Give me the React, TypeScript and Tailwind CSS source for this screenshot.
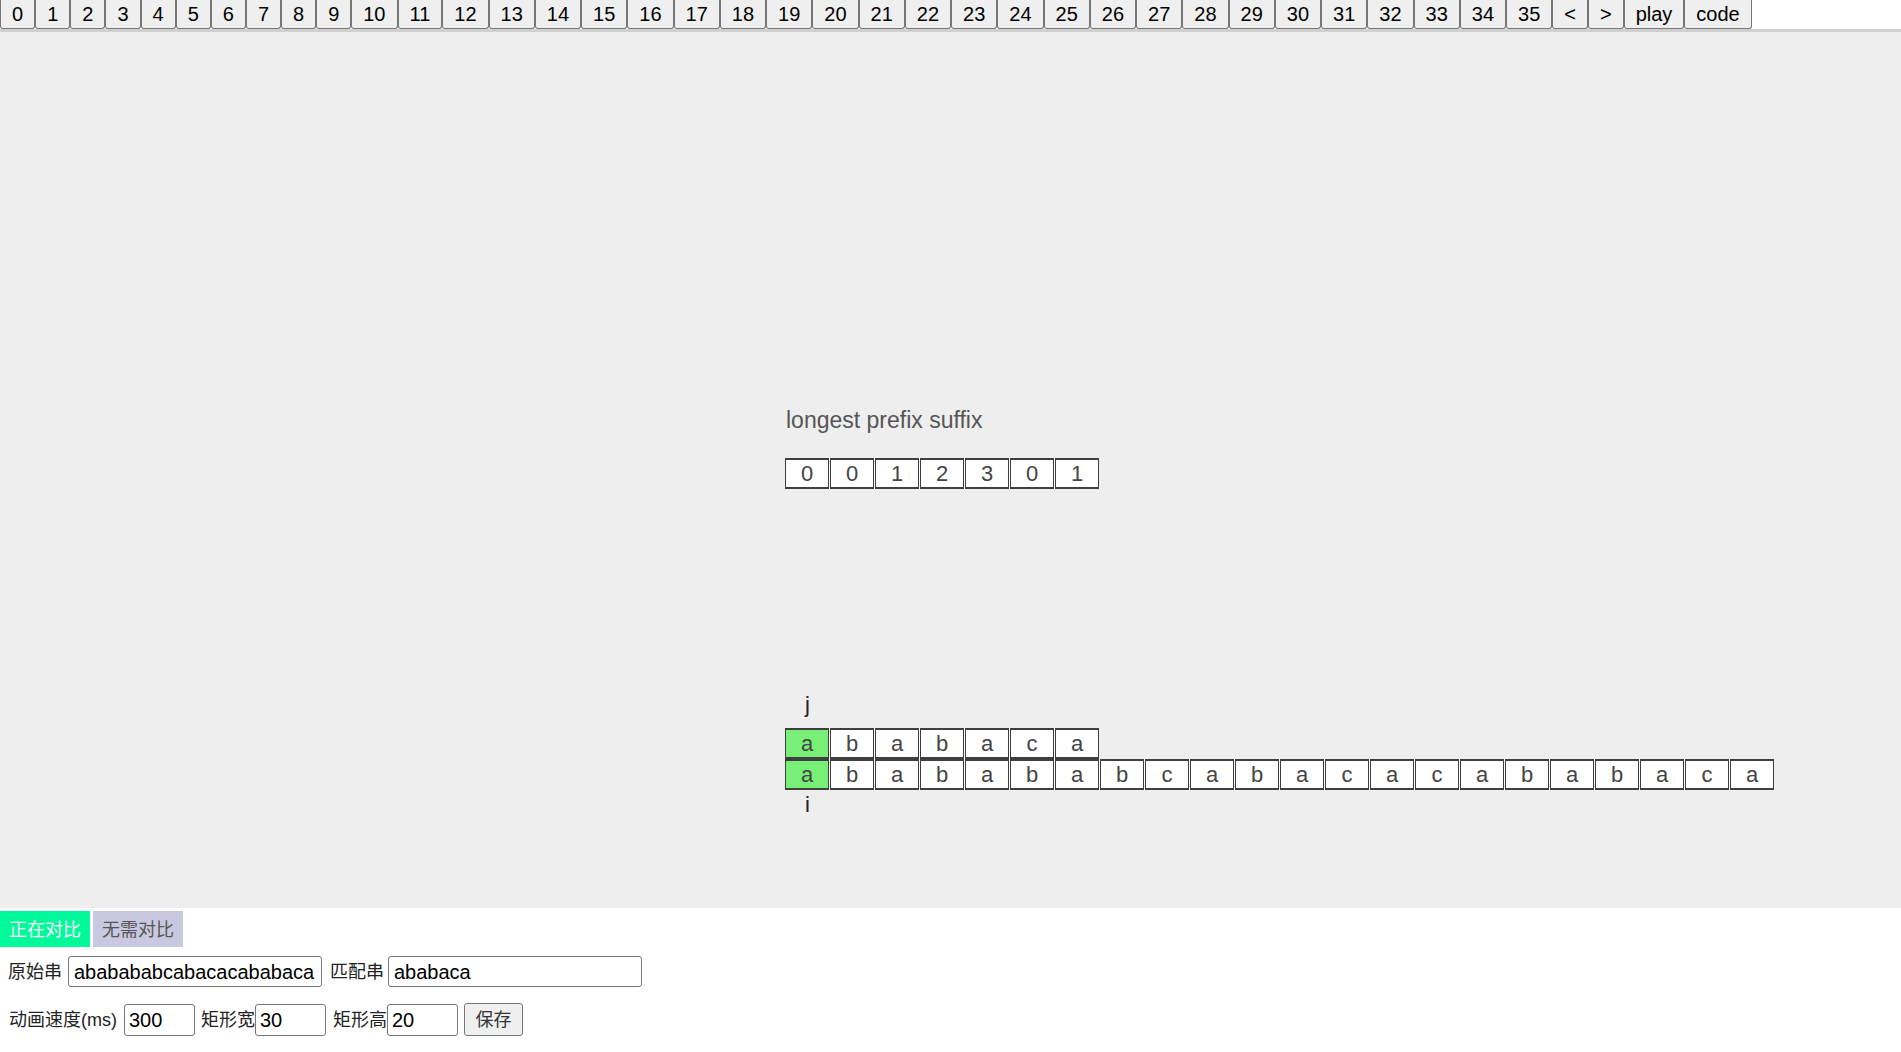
import React from "react";

const navLabels = [
  ...Array.from({ length: 36 }, (_, i) => String(i)),
  "<",
  ">",
  "play",
  "code",
];

const lps = [0, 0, 1, 2, 3, 0, 1];
const pattern = "ababaca".split("");
const text = "ababababcabacacababaca".split("");

function Cell({ v, green }: { v: string | number; green?: boolean }) {
  return (
    <div
      className={
        "w-[44px] h-[31px] border-y-2 border-x border-[#3f3f3f] flex items-center justify-center text-[22px] leading-none text-[#444] " +
        (green ? "bg-[#78f078]" : "bg-white")
      }
    >
      {v}
    </div>
  );
}

export default function App() {
  const sans = { fontFamily: '"Liberation Sans", Arial, "Noto Sans CJK SC", sans-serif' };
  return (
    <div className="w-[1901px] h-[1052px] bg-white overflow-hidden" style={sans}>
      {/* top nav */}
      <div className="h-[32px] border-b-[3px] border-[#d0d0d0] bg-white flex items-start">
        {navLabels.map((l) => (
          <button
            key={l}
            className="h-[29px] px-[11px] border border-t-0 border-[#767676] rounded-b-[3px] bg-[#efefef] text-[20px] leading-[25px] text-black"
          >
            {l}
          </button>
        ))}
      </div>

      {/* visualization canvas */}
      <div className="h-[876px] bg-[#eeeeee] pl-[786px] pt-[377px]">
        <div className="h-[23px] text-[23px] leading-[23px] text-[#555] whitespace-nowrap">
          longest prefix suffix
        </div>
        <div className="mt-[26px] -ml-[1px] flex gap-[1px] bg-white w-max">
          {lps.map((v, i) => (
            <Cell key={i} v={v} />
          ))}
        </div>
        <div className="mt-[205px] -ml-[1px] w-[45px] h-[22px] text-[22px] leading-[22px] text-center text-[#222]">j</div>
        <div className="mt-[12px] -ml-[1px] flex gap-[1px] bg-white w-max">
          {pattern.map((v, i) => (
            <Cell key={i} v={v} green={i === 0} />
          ))}
        </div>
        <div className="-ml-[1px] flex gap-[1px] bg-white w-max">
          {text.map((v, i) => (
            <Cell key={i} v={v} green={i === 0} />
          ))}
        </div>
        <div className="mt-[4px] -ml-[1px] w-[45px] h-[22px] text-[22px] leading-[22px] text-center text-[#222]">i</div>
      </div>

      {/* controls */}
      <div className="mt-[3px] flex gap-[3px] h-[36px]">
        <div className="h-[36px] w-[90px] bg-[#00fa9a] text-white text-[18px] leading-none pt-[2px] flex items-center justify-center">
          正在对比
        </div>
        <div className="h-[36px] w-[90px] bg-[#c8c8e0] text-[#555] text-[18px] leading-none pt-[2px] flex items-center justify-center">
          无需对比
        </div>
      </div>

      <div className="mt-[9px] h-[31px] flex items-center pl-[8px] text-[18px] text-[#222]">
        <span className="w-[60px] whitespace-nowrap pt-[2px]">原始串</span>
        <input
          readOnly
          value="ababababcabacacababaca"
          className="w-[254px] h-[31px] border border-[#767676] rounded-[3px] px-[5px] pt-[1px] text-[20px] text-black bg-white outline-none"
        />
        <span className="ml-[8px] w-[58px] whitespace-nowrap pt-[2px]">匹配串</span>
        <input
          readOnly
          value="ababaca"
          className="w-[254px] h-[31px] border border-[#767676] rounded-[3px] px-[5px] pt-[1px] text-[20px] text-black bg-white outline-none"
        />
      </div>

      <div className="mt-[16px] h-[33px] flex items-center pl-[9px] text-[18px] text-[#222]">
        <span className="w-[115px] whitespace-nowrap pt-[2px]">动画速度(ms)</span>
        <input
          readOnly
          value="300"
          className="w-[71px] h-[32px] border border-[#767676] rounded-[3px] px-[4px] pt-[1px] text-[20px] text-black bg-white outline-none"
        />
        <span className="ml-[6px] w-[54px] overflow-hidden whitespace-nowrap pt-[2px]">矩形宽</span>
        <input
          readOnly
          value="30"
          className="w-[71px] h-[32px] border border-[#767676] rounded-[3px] px-[4px] pt-[1px] text-[20px] text-black bg-white outline-none"
        />
        <span className="ml-[7px] w-[54px] overflow-hidden whitespace-nowrap pt-[2px]">矩形高</span>
        <input
          readOnly
          value="20"
          className="w-[71px] h-[32px] border border-[#767676] rounded-[3px] px-[4px] pt-[1px] text-[20px] text-black bg-white outline-none"
        />
        <button className="ml-[6px] w-[59px] h-[33px] border border-[#767676] rounded-[3px] bg-[#efefef] text-[18px] text-[#333] pt-[2px]">
          保存
        </button>
      </div>
    </div>
  );
}
